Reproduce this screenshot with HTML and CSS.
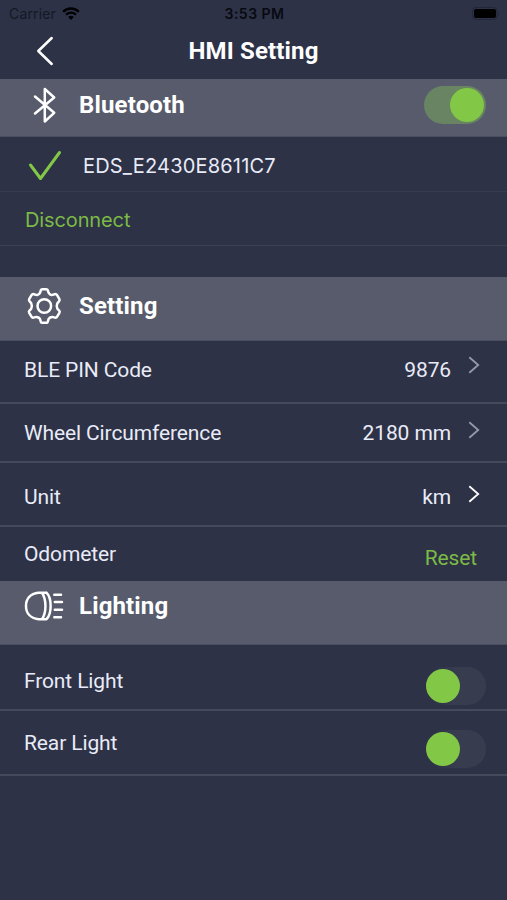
FILE: index.html
```
<!DOCTYPE html>
<html lang="en">
<head>
    <meta charset="UTF-8">
    <title>HMI Setting</title>
    <link rel="stylesheet" href="styles.css">
</head>
<body>
    <div class="status">
        <div class="carrier">Carrier
            <svg width="18" height="13" viewBox="0 0 18 13">
                <path d="M1.2 4.8 A11 11 0 0 1 16.8 4.8" fill="none" stroke="#000" stroke-width="2.4"/>
                <path d="M4 7.8 A7 7 0 0 1 14 7.8" fill="none" stroke="#000" stroke-width="2.2"/>
                <path d="M9 13 L6.2 10 A4 4 0 0 1 11.8 10 Z"/>
            </svg>
        </div>
        <div class="time">3:53 PM</div>
        <div class="battery">
            <svg width="28" height="13" viewBox="0 0 28 13">
                <rect x="0.5" y="0.5" width="24.5" height="12" rx="3.5" fill="none" stroke="#22263a"/>
                <rect x="2" y="2" width="22" height="9" rx="2"/>
                <path d="M26.3 4.5 Q28 6.5 26.3 8.5 Z" fill="#22263a"/>
            </svg>
        </div>
    </div>
    <div class="header">
        <svg class="back" width="20" height="30" viewBox="0 0 20 30">
            <path d="M16.7 2 L3.3 15 L16.7 28" class="line"/>
        </svg>
        <h1>HMI Setting</h1>
    </div>

    <div class="section bluetooth">
        <svg class="icon" width="40" height="40" viewBox="0 0 40 40">
            <path d="M11 11.5 L30.2 27.8 L20.8 36.5 V4 L30.2 12.5 L11 28.5" class="line"/>
        </svg>
        <h2>Bluetooth</h2>
        <div class="switch on"><span class="knob"></span></div>
    </div>
    <div class="row device">
        <svg class="check" width="34" height="32" viewBox="0 0 34 32">
            <path d="M2.5 15 L12.5 28.5 L31.5 2.5"/>
        </svg>
        <span class="name">EDS_E2430E8611C7</span>
    </div>
    <div class="row disconnect">
        <span class="link">Disconnect</span>
    </div>

    <div class="section setting">
        <svg class="icon" width="40" height="40" viewBox="0 0 40 40">
            <path class="line" d="M16.1 6.6 L16.8 4.3 Q17.2 3.2 18.3 3.2 H22.3 Q23.4 3.2 23.8 4.3 L24.6 6.8 Q25.5 8.6 27.5 9.1 L30.7 8.2 Q32.3 7.8 33.1 9.2 L35.4 13.1 Q36 14.4 35 15.4 L33.4 17.2 Q32 20 33.4 22.8 L35.2 24.6 Q36.1 25.6 35.4 26.8 L33.1 30.7 Q32.4 31.9 31 31.6 L28.3 30.9 Q25.5 31 24.6 33.1 L23.8 35.7 Q23.4 36.8 22.3 36.8 H18.3 Q17.2 36.8 16.8 35.7 L16 33.1 Q15.1 31 12.3 30.9 L9.6 31.6 Q8.2 31.9 7.5 30.7 L5.2 26.8 Q4.5 25.6 5.4 24.6 L7.2 22.8 Q8.6 20 7.2 17.2 L5.6 15.4 Q4.6 14.4 5.2 13.1 L7.5 9.2 Q8.3 7.8 9.9 8.2 L13.1 9.1 Q15.1 8.6 16.1 6.6 Z"/>
            <circle class="line" cx="20.3" cy="20" r="6.8"/>
        </svg>
        <h2>Setting</h2>
    </div>
    <div class="row pin">
        <span class="label">BLE PIN Code</span>
        <span class="value">9876</span>
        <svg class="arrow dim" width="12" height="18" viewBox="0 0 12 18"><path d="M1.3 1.3 L10.2 9 L1.3 16.7"/></svg>
    </div>
    <div class="row wheel">
        <span class="label">Wheel Circumference</span>
        <span class="value">2180 mm</span>
        <svg class="arrow dim" width="12" height="18" viewBox="0 0 12 18"><path d="M1.3 1.3 L10.2 9 L1.3 16.7"/></svg>
    </div>
    <div class="row unit">
        <span class="label">Unit</span>
        <span class="value">km</span>
        <svg class="arrow" width="12" height="18" viewBox="0 0 12 18"><path d="M1.3 1.3 L10.2 9 L1.3 16.7"/></svg>
    </div>
    <div class="row odometer">
        <span class="label">Odometer</span>
        <span class="reset">Reset</span>
    </div>

    <div class="section lighting">
        <svg class="icon" width="40" height="40" viewBox="0 0 40 40">
            <path class="line" d="M22.5 6.7 H14.5 C6 7.7 2 13.2 2 20 S6 32.2 14.5 33.2 H22.5 C28 27.7 28 12.2 22.5 6.7 M18 6.7 C22.6 13.7 22.6 26.2 18 33.2"/>
            <path class="line" d="M30.3 8.7 H37 M30.8 16 H38 M30.8 23.7 H38 M30.3 31.2 H37"/>
        </svg>
        <h2>Lighting</h2>
    </div>
    <div class="row front">
        <span class="label">Front Light</span>
        <div class="switch"><span class="knob"></span></div>
    </div>
    <div class="row rear">
        <span class="label">Rear Light</span>
        <div class="switch"><span class="knob"></span></div>
    </div>
</body>
</html>
```
FILE: styles.css
```
* {
    box-sizing: border-box;
}
body {
    margin: 0;
    height: 900px;
    overflow: hidden;
    background-color: #2d3246;
    font-family: Roboto, Arial, sans-serif;
    color: #e9ebf8;
}
h1, h2 {
    margin: 0;
    color: white;
    font-size: 24px;
    line-height: 28px;
    font-weight: bold;
    letter-spacing: 0.15px;
}
.line {
    fill: none;
    stroke: white;
    stroke-width: 2.5;
    stroke-linecap: round;
    stroke-linejoin: round;
}
.status {
    display: grid;
    grid-template-columns: 1fr auto 1fr;
    align-items: center;
    height: 27px;
    padding: 0 7px 0 9px;
    font-family: Inter, sans-serif;
    font-size: 14px;
    color: #080a12;
}
.carrier {
    display: flex;
    align-items: center;
    gap: 6px;
    letter-spacing: 0.15px;
    color: #151824;
}
.time {
    font-weight: 600;
    letter-spacing: 0.5px;
}
.battery {
    display: flex;
    justify-content: flex-end;
}
.header {
    display: grid;
    grid-template-columns: 40px auto 40px;
    justify-content: space-between;
    align-items: center;
    height: 52px;
    padding: 0 35px 4px;
}
.section {
    display: flex;
    align-items: center;
    height: 64px;
    padding: 0 21px 6px 24px;
    background-color: #575b6b;
    border-bottom: 1px solid #4a4f60;
}
.section .icon {
    margin-right: 15px;
}
.bluetooth {
    height: 58px;
    padding-bottom: 5px;
}
.bluetooth .switch {
    margin-bottom: 1px;
}
.lighting {
    padding-bottom: 13px;
}
.row {
    display: flex;
    align-items: center;
    padding: 0 21px 0 24px;
    border-bottom: 2px solid #444a5c;
    font-size: 21px;
    line-height: 26px;
    letter-spacing: -0.12px;
}
.device {
    height: 55px;
    padding: 3px 0 0 28px;
    border-bottom: 1px solid #373c50;
}
.name {
    margin-left: 21px;
    font-family: Inter, sans-serif;
    font-size: 20px;
    letter-spacing: 0.18px;
}
.disconnect {
    height: 54px;
    margin-bottom: 31px;
    padding: 2px 0 0 25px;
    border-bottom: 1px solid #3c4154;
    font-family: Inter, sans-serif;
    font-size: 20px;
}
.check {
    fill: none;
    stroke: #82c846;
    stroke-width: 3;
    stroke-linecap: round;
    stroke-linejoin: round;
}
.link, .reset {
    color: #7cba45;
}
.value, .reset, .switch {
    margin-left: auto;
}
.arrow {
    margin: 0 6px 0 17px;
    fill: none;
    stroke: white;
    stroke-width: 1.8;
}
.dim {
    stroke: #9699a8;
}
.pin {
    height: 63px;
    padding-bottom: 4px;
}
.pin .arrow {
    margin-bottom: 9px;
}
.wheel {
    height: 59px;
}
.wheel .arrow, .unit .arrow {
    margin-bottom: 6px;
}
.unit {
    height: 64px;
    padding-top: 6px;
}
.odometer {
    height: 54px;
    border: 0;
}
.reset {
    margin-right: 9px;
    margin-top: 8px;
}
.front {
    height: 66px;
    padding-top: 7px;
}
.rear {
    height: 65px;
}
.switch {
    width: 62px;
    height: 38px;
    padding: 2px;
    border-radius: 19px;
    background-color: #373c4f;
}
.row .switch {
    margin-top: 12px;
    background: linear-gradient(to right, #2d3246 15%, #373c4f 50%);
}
.front .switch {
    margin-top: 11px;
}
.knob {
    display: block;
    width: 34px;
    height: 34px;
    border-radius: 50%;
    background-color: #82c846;
}
.switch.on {
    background-color: #698463;
}
.on .knob {
    margin-left: auto;
}
```
